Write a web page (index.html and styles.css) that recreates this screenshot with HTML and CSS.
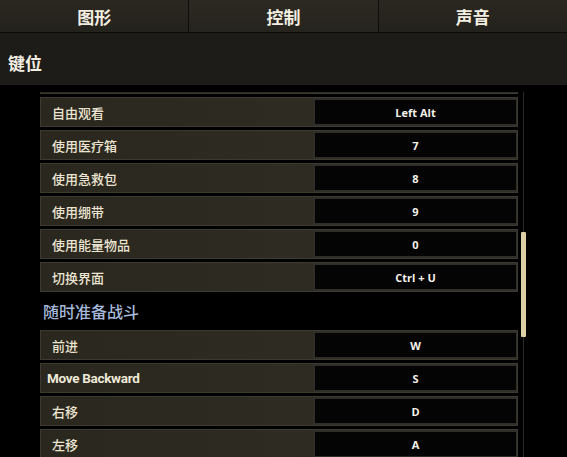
FILE: index.html
```html
<!DOCTYPE html>
<html lang="zh">
<head>
<meta charset="utf-8">
<link rel="stylesheet" href="styles.css">
</head>
<body>
<div class="tabs">
  <div class="tab">图形</div>
  <div class="tab tab-mid">控制</div>
  <div class="tab">声音</div>
</div>
<div class="header">键位</div>
<div class="content">
  <div class="list">
    <div class="row"><div class="label"></div><div class="key"></div></div>
    <div class="row"><div class="label">自由观看</div><div class="key">Left Alt</div></div>
    <div class="row"><div class="label">使用医疗箱</div><div class="key">7</div></div>
    <div class="row"><div class="label">使用急救包</div><div class="key">8</div></div>
    <div class="row"><div class="label">使用绷带</div><div class="key">9</div></div>
    <div class="row"><div class="label">使用能量物品</div><div class="key">0</div></div>
    <div class="row"><div class="label">切换界面</div><div class="key">Ctrl + U</div></div>
    <div class="section">随时准备战斗</div>
    <div class="row"><div class="label">前进</div><div class="key">W</div></div>
    <div class="row"><div class="label latin">Move Backward</div><div class="key">S</div></div>
    <div class="row"><div class="label">右移</div><div class="key">D</div></div>
    <div class="row"><div class="label">左移</div><div class="key">A</div></div>
  </div>
  <div class="track"><div class="thumb"></div></div>
</div>
</body>
</html>
```
FILE: styles.css
```css
html, body {
  margin: 0;
  padding: 0;
  background: #000;
  width: 567px;
  height: 457px;
  overflow: hidden;
  font-family: "Noto Sans CJK SC", "Noto Sans", sans-serif;
}
.tabs {
  display: flex;
  height: 32px;
  border-bottom: 1px solid #0c0b09;
}
.tab {
  flex: 1;
  display: flex;
  align-items: center;
  justify-content: center;
  background: linear-gradient(#2a2720, #24221c);
  color: #f2eee2;
  font-size: 17px;
  font-weight: 700;
  border-right: 1px solid #0e0d0b;
}
.tab:last-child { border-right: none; }
.tab-mid { background: linear-gradient(#2c2922, #26241e); }
.header {
  height: 52px;
  background: #1d1c19;
  color: #f2eee2;
  font-size: 17px;
  font-weight: 700;
  display: flex;
  align-items: center;
  padding-left: 8px;
  padding-top: 6px;
  box-sizing: border-box;
}
.content {
  margin-top: 7px;
  height: 365px;
  overflow: hidden;
  display: flex;
  position: relative;
}
.list {
  margin-top: -28px;
  margin-left: 40px;
  width: 478px;
  display: flex;
  flex-direction: column;
  gap: 3px;
}
.row {
  height: 30px;
  flex: none;
  display: flex;
  box-sizing: border-box;
  border: 1px solid #3d3a31;
  background: linear-gradient(90deg, #2a271f 0%, #2e2b23 50%, #2c2920 100%);
}
.label {
  flex: 1;
  display: flex;
  align-items: center;
  padding-left: 11px;
  color: #ece5d2;
  font-size: 13px;
  font-weight: 500;
}
.label.latin {
  font-family: "Roboto", "Noto Sans", sans-serif;
  font-weight: 700;
  font-size: 13.5px;
  letter-spacing: -0.3px;
  padding-left: 6px;
  color: #efe9d8;
}
.key {
  width: 204px;
  box-sizing: border-box;
  border: 2px solid #302e28;
  border-right-width: 1px;
  background: #050404;
  display: flex;
  align-items: center;
  justify-content: center;
  color: #f4f1ea;
  font-family: "Open Sans", "Noto Sans", sans-serif;
  font-weight: 700;
  font-size: 11px;
}
.section {
  height: 32px;
  flex: none;
  display: flex;
  align-items: center;
  padding-left: 3px;
  color: #a6b9da;
  font-size: 16px;
  font-weight: 500;
}
.track {
  margin-left: 4px;
  width: 3px;
  height: 100%;
  display: flex;
  justify-content: center;
  position: relative;
}
.track::before {
  content: "";
  width: 1px;
  height: 100%;
  background: #2a2926;
}
.thumb {
  position: absolute;
  top: 140px;
  left: -1px;
  width: 5px;
  height: 105px;
  background: #dccfa6;
  border-radius: 1px;
}
```
